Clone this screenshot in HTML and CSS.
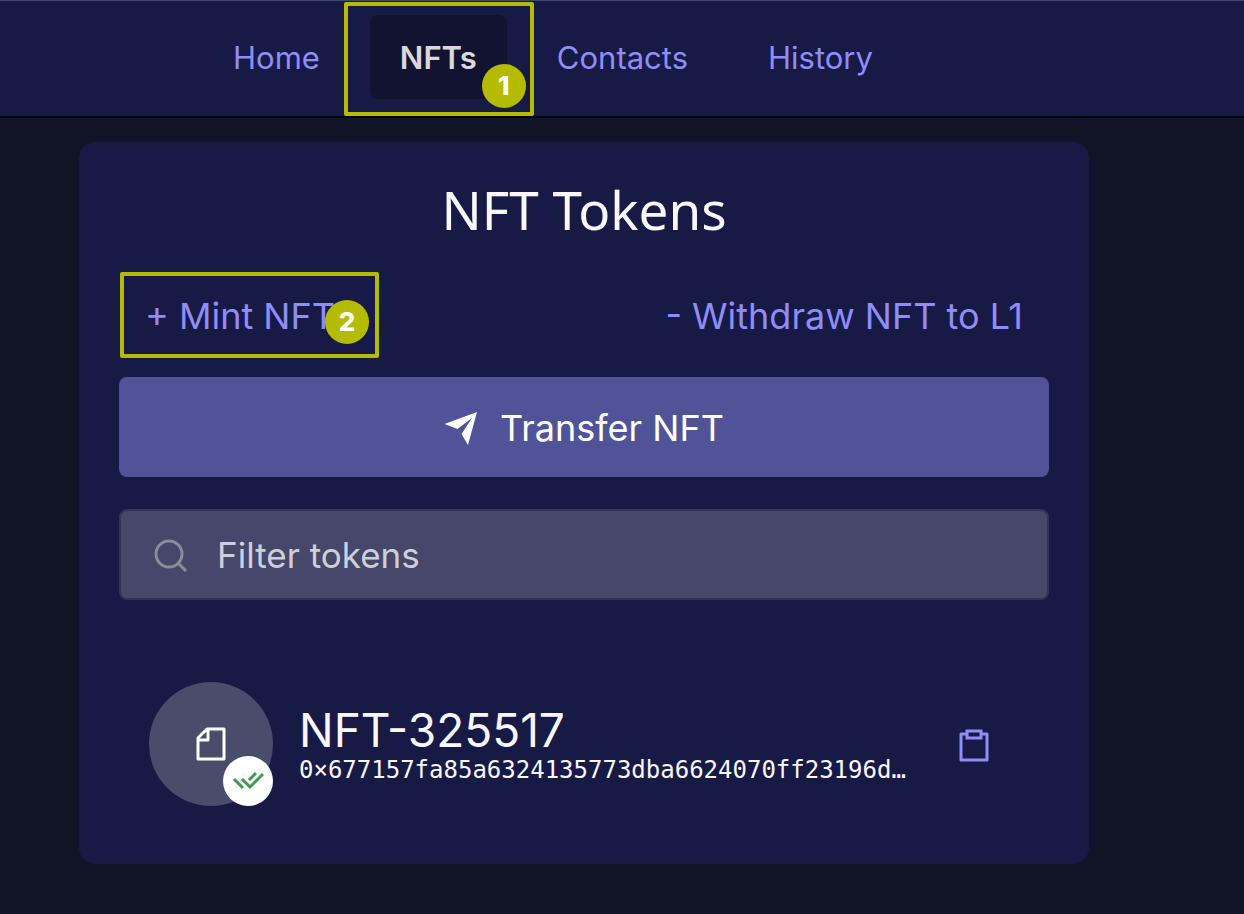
FILE: index.html
```html
<!DOCTYPE html>
<html lang="en">

<head>
    <meta charset="UTF-8">
    <meta name="viewport" content="width=device-width, initial-scale=1.0">
    <title>NFT Tokens</title>
    <link rel="stylesheet" href="styles.css">
</head>

<body>

    <header class="header">
        <nav class="nav">
            <a class="nav-link" href="#home">Home</a>
            <a class="nav-link active" href="#nfts">NFTs
                <span class="step step-nav"><span class="step-number">1</span></span>
            </a>
            <a class="nav-link" href="#contacts">Contacts</a>
            <a class="nav-link" href="#history">History</a>
        </nav>
    </header>

    <main class="card">
        <h1 class="title">NFT Tokens</h1>

        <div class="actions">
            <button class="link-button" type="button">+ Mint NFT
                <span class="step step-mint"><span class="step-number">2</span></span>
            </button>
            <button class="link-button" type="button">- Withdraw NFT to L1</button>
        </div>

        <button class="transfer-button" type="button">
            <svg width="34" height="34" viewBox="0 0 34 34" fill="#fff">
                <path d="M0.5 13 L33 1 L24 34 L17.5 23 L28 7 L13.5 18 Z" />
            </svg>
            Transfer NFT
        </button>

        <div class="search">
            <svg width="34" height="34" viewBox="0 0 34 34" fill="none" stroke="#858f96" stroke-width="3">
                <circle cx="16" cy="16" r="13" />
                <path d="M25 25 L33 33" />
            </svg>
            <input class="search-input" type="text" placeholder="Filter tokens" aria-label="Filter tokens">
        </div>

        <div class="token">
            <div class="avatar">
                <svg width="30" height="34" viewBox="0 0 30 34" fill="none" stroke="#fff" stroke-width="3" stroke-linejoin="round">
                    <path d="M11 2 H28 V32 H2 V11 Z M12 2 V13 H2" />
                </svg>
                <span class="status">
                    <svg width="32" height="20" viewBox="0 0 32 20" fill="none" stroke="#3f9a50" stroke-width="3">
                        <path d="M2 8 L11 17 M10 8 L18 16 L31 3 M17 9 L24 2" />
                    </svg>
                </span>
            </div>
            <div class="token-info">
                <div class="token-name">NFT-325517</div>
                <div class="token-address">0×677157fa85a6324135773dba6624070ff23196d…</div>
            </div>
            <button class="copy-button" type="button" aria-label="Copy address">
                <svg width="30" height="33" viewBox="0 0 30 33" fill="none" stroke="#8e8df9" stroke-width="3">
                    <path d="M7.5 5 H2 V31 H28 V5 H22.5" stroke-linejoin="round" />
                    <rect x="8" y="2" width="14" height="7" />
                </svg>
            </button>
        </div>
    </main>

</body>

</html>
```

FILE: styles.css
```css
* {
    box-sizing: border-box;
}

body {
    margin: 0;
    font-family: Inter, Roboto, sans-serif;
    color: #f8f8fc;
    background-color: #111327;
}

button {
    border: none;
    font-family: inherit;
    cursor: pointer;
}

svg {
    display: block;
    flex-shrink: 0;
}

.header {
    background-color: #181a46;
    border-top: 1px solid #42456a;
    border-bottom: 2px solid #04040c;
    padding: 14px 203px 17px;
}

.nav {
    display: flex;
    gap: 20px;
}

.nav-link {
    position: relative;
    padding: 1px 30px 0;
    border-radius: 8px;
    font-size: 31px;
    line-height: 83px;
    color: #8e8df9;
    text-decoration: none;
}

.nav-link.active {
    background-color: #121331;
    color: #d9d9dc;
    font-weight: 600;
}

/* numbered step markers */
.step {
    position: absolute;
    border: 4px solid #b4bb00;
    border-radius: 2px;
}

.step-nav {
    top: -13px;
    bottom: -17px;
    left: -26px;
    right: -27px;
}

.step-mint {
    top: 0;
    bottom: 0;
    left: 1px;
    right: -18px;
}

.step-number {
    position: absolute;
    right: 4px;
    bottom: 4px;
    width: 44px;
    height: 44px;
    border-radius: 50%;
    background-color: #b4bb00;
    color: #fff;
    font-size: 26px;
    font-weight: 800;
    line-height: 44px;
    text-align: center;
}

.step-mint .step-number {
    right: 6px;
    bottom: 10px;
}

.card {
    max-width: 1010px;
    margin: 24px 79px 50px;
    padding: 36px 40px 58px;
    border-radius: 16px;
    background-color: #181a46;
}

.title {
    margin: 0 0 30px;
    font-family: "Noto Sans", sans-serif;
    font-size: 53px;
    font-weight: 400;
    line-height: 64px;
    text-align: center;
}

.actions {
    display: flex;
    justify-content: space-between;
    margin-bottom: 19px;
}

.link-button {
    position: relative;
    padding: 2px 26px 0;
    background: none;
    font-size: 36px;
    line-height: 84px;
    color: #8e8df9;
}

.transfer-button {
    display: flex;
    align-items: center;
    justify-content: center;
    gap: 22px;
    width: 100%;
    padding: 2px 0 0;
    border-radius: 8px;
    background-color: #505397;
    color: #fff;
    font-size: 36px;
    line-height: 98px;
}

.search {
    display: flex;
    align-items: center;
    gap: 30px;
    height: 91px;
    margin: 32px 0 52px;
    padding: 0 32px;
    border: 2px solid #32335c;
    border-radius: 8px;
    background-color: #46476a;
}

.search-input {
    flex: 1;
    min-width: 0;
    padding: 0;
    border: none;
    outline: none;
    background: none;
    font-family: inherit;
    font-size: 35px;
    color: #fff;
}

.search-input::placeholder {
    color: #ccd1d8;
    opacity: 1;
}

.token {
    display: flex;
    align-items: center;
    gap: 26px;
    padding: 30px 60px 0 30px;
}

.avatar {
    position: relative;
    display: flex;
    align-items: center;
    justify-content: center;
    flex-shrink: 0;
    width: 124px;
    height: 124px;
    border-radius: 50%;
    background-color: #4a4c6c;
}

.status {
    position: absolute;
    right: 0;
    bottom: 0;
    display: flex;
    align-items: center;
    justify-content: center;
    width: 50px;
    height: 50px;
    border-radius: 50%;
    background-color: #fff;
}

.token-info {
    flex: 1;
    min-width: 0;
}

.token-name {
    font-size: 46px;
    line-height: 52px;
}

.token-address {
    font-family: "DejaVu Sans Mono", monospace;
    font-size: 24px;
    line-height: 28px;
    white-space: nowrap;
}

.copy-button {
    padding: 2px 0 0;
    background: none;
}
```
